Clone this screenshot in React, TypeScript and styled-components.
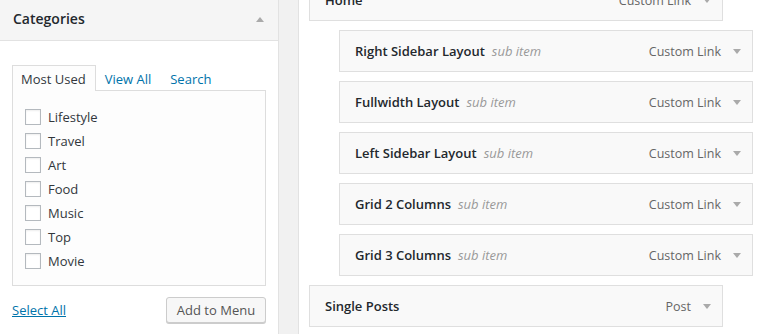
import React from "react";
import styled, { createGlobalStyle } from "styled-components";

const Global = createGlobalStyle`
  html, body { margin: 0; padding: 0; background: #fff; }
  body { font-family: "Open Sans", "Liberation Sans", sans-serif; font-size: 13px; color: #32373c; }
  * { box-sizing: border-box; }
`;

const Page = styled.div`
  display: flex;
  width: 764px;
  height: 334px;
  overflow: hidden;
  background: #fff;
`;

const Sidebar = styled.div`
  width: 279px;
  flex: none;
  background: #fff;
  border-right: 1px solid #e2e2e2;
  display: flex;
  flex-direction: column;
`;

const Gutter = styled.div`
  width: 20px;
  flex: none;
  background: #f1f1f1;
  border-right: 1px solid #e2e2e2;
`;

const BoxHeader = styled.div`
  height: 41px;
  flex: none;
  background: #f5f5f5;
  border-bottom: 1px solid #e2e2e2;
  display: flex;
  align-items: center;
  justify-content: space-between;
  padding: 0 14px 0 13px;
`;

const BoxTitle = styled.h3`
  margin: 0;
  font-size: 14px;
  font-weight: 600;
  color: #23282d;
  line-height: 1;
  margin-top: -2px;
`;

const Caret = styled.span<{ $up?: boolean }>`
  display: inline-block;
  flex: none;
  width: 0;
  height: 0;
  border-left: 4px solid transparent;
  border-right: 4px solid transparent;
  ${(p) => (p.$up ? "border-bottom: 5px solid #aaa; margin-top: -2px;" : "border-top: 5px solid #aaa;")}
`;

const BoxBody = styled.div`
  padding: 24px 12px 0 12px;
  display: flex;
  flex-direction: column;
`;

const Tabs = styled.ul`
  list-style: none;
  margin: 0;
  padding: 0;
  display: flex;
  position: relative;
  z-index: 1;
`;

const Tab = styled.li<{ $active?: boolean }>`
  height: 26px;
  padding: 0 9px 0 8px;
  display: flex;
  align-items: center;
  border: 1px solid ${(p) => (p.$active ? "#ddd" : "transparent")};
  border-bottom: none;
  background: ${(p) => (p.$active ? "#fdfdfd" : "transparent")};
  color: ${(p) => (p.$active ? "#32373c" : "#0073aa")};
  font-size: 13px;
  margin-bottom: -1px;
`;

const TabPanel = styled.div`
  height: 196px;
  border: 1px solid #ddd;
  background: #fdfdfd;
  padding: 18px 12px 0 12px;
  display: flex;
  flex-direction: column;
  gap: 8px;
`;

const CheckRow = styled.label`
  display: flex;
  align-items: center;
  gap: 7px;
  height: 16px;
  font-size: 13px;
  color: #32373c;
`;

const Check = styled.span`
  width: 16px;
  height: 16px;
  flex: none;
  border: 1px solid #b4b9be;
  background: #fff;
  box-shadow: inset 0 1px 2px rgba(0, 0, 0, 0.07);
`;

const Actions = styled.div`
  display: flex;
  align-items: center;
  justify-content: space-between;
  margin-top: 11px;
`;

const TextLink = styled.a`
  color: #0073aa;
  text-decoration: underline;
  font-size: 13px;
  margin-top: -1px;
`;

const Button = styled.button`
  width: 100px;
  height: 26px;
  border: 1px solid #ccc;
  border-radius: 3px;
  background: #f7f7f7;
  box-shadow: 0 1px 0 #ccc;
  color: #555;
  font-family: "Open Sans", "Liberation Sans", sans-serif;
  font-size: 13px;
  padding: 0;
  line-height: 24px;
`;

const MenuArea = styled.div`
  flex: 1;
  background: #fff;
  padding-left: 10px;
`;

const MenuList = styled.ul`
  list-style: none;
  margin: -21px 0 0 0;
  padding: 0;
  display: flex;
  flex-direction: column;
  gap: 9px;
`;

const MenuItem = styled.li<{ $depth: number }>`
  width: 414px;
  height: 42px;
  margin-left: ${(p) => p.$depth * 30}px;
  border: 1px solid #dfdfdf;
  background: #f9f9f9;
  display: flex;
  align-items: center;
  padding: 0 11px 0 15px;
`;

const ItemTitle = styled.span`
  font-weight: 600;
  font-size: 13px;
  color: #23282d;
`;

const SubLabel = styled.span`
  font-style: italic;
  color: #999;
  margin-left: 7px;
  font-size: 13px;
`;

const ItemType = styled.span`
  margin-left: auto;
  color: #666;
  font-size: 12.5px;
  margin-right: 12px;
`;

const items: { title: string; type: string; depth: number }[] = [
  { title: "Home", type: "Custom Link", depth: 0 },
  { title: "Right Sidebar Layout", type: "Custom Link", depth: 1 },
  { title: "Fullwidth Layout", type: "Custom Link", depth: 1 },
  { title: "Left Sidebar Layout", type: "Custom Link", depth: 1 },
  { title: "Grid 2 Columns", type: "Custom Link", depth: 1 },
  { title: "Grid 3 Columns", type: "Custom Link", depth: 1 },
  { title: "Single Posts", type: "Post", depth: 0 },
];

const categories = ["Lifestyle", "Travel", "Art", "Food", "Music", "Top", "Movie"];

export default function App() {
  return (
    <>
      <Global />
      <Page>
        <Sidebar>
          <BoxHeader>
            <BoxTitle>Categories</BoxTitle>
            <Caret $up />
          </BoxHeader>
          <BoxBody>
            <Tabs>
              <Tab $active>Most Used</Tab>
              <Tab>View All</Tab>
              <Tab>Search</Tab>
            </Tabs>
            <TabPanel>
              {categories.map((c) => (
                <CheckRow key={c}>
                  <Check />
                  {c}
                </CheckRow>
              ))}
            </TabPanel>
            <Actions>
              <TextLink href="#">Select All</TextLink>
              <Button>Add to Menu</Button>
            </Actions>
          </BoxBody>
        </Sidebar>
        <Gutter />
        <MenuArea>
          <MenuList>
            {items.map((it) => (
              <MenuItem key={it.title} $depth={it.depth}>
                <ItemTitle>{it.title}</ItemTitle>
                {it.depth > 0 && <SubLabel>sub item</SubLabel>}
                <ItemType>{it.type}</ItemType>
                <Caret />
              </MenuItem>
            ))}
          </MenuList>
        </MenuArea>
      </Page>
    </>
  );
}
